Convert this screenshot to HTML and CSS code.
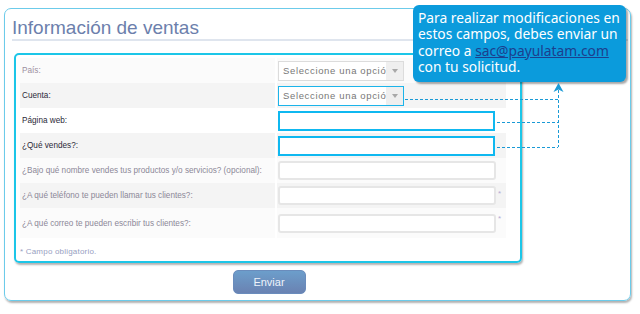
FILE: index.html
```html
<!DOCTYPE html>
<html lang="es">
<head>
    <meta charset="UTF-8" />
    <meta name="viewport" content="width=device-width, initial-scale=1" />
    <title>Información de ventas</title>
    <link rel="stylesheet" href="styles.css">
</head>
<body>
    <div class="page">
        <div class="panel">
            <h1 class="title">Información de ventas</h1>
            <form class="form-box" id="salesForm">
                <div class="row">
                    <label class="cell-label muted" for="pais">País:</label>
                    <div class="cell-field">
                        <div class="select">
                            <select id="pais" name="pais">
                                <option>Seleccione una opción</option>
                            </select>
                            <span class="select-arrow"></span>
                        </div>
                    </div>
                </div>
                <div class="row alt">
                    <label class="cell-label strong" for="cuenta">Cuenta:</label>
                    <div class="cell-field">
                        <div class="select active">
                            <select id="cuenta" name="cuenta">
                                <option>Seleccione una opción</option>
                            </select>
                            <span class="select-arrow"></span>
                        </div>
                    </div>
                </div>
                <div class="row plain">
                    <label class="cell-label strong" for="web">Página web:</label>
                    <div class="cell-field">
                        <input class="text-input active" type="text" id="web" name="web" />
                    </div>
                </div>
                <div class="row alt">
                    <label class="cell-label strong" for="vendes">¿Qué vendes?:</label>
                    <div class="cell-field">
                        <input class="text-input active" type="text" id="vendes" name="vendes" />
                    </div>
                </div>
                <div class="row">
                    <label class="cell-label" for="marca">¿Bajo qué nombre vendes tus productos y/o servicios? (opcional):</label>
                    <div class="cell-field">
                        <input class="text-input" type="text" id="marca" name="marca" />
                    </div>
                </div>
                <div class="row alt">
                    <label class="cell-label" for="telefono">¿A qué teléfono te pueden llamar tus clientes?:</label>
                    <div class="cell-field">
                        <input class="text-input" type="text" id="telefono" name="telefono" />
                        <span class="required">*</span>
                    </div>
                </div>
                <div class="row last">
                    <label class="cell-label" for="correo">¿A qué correo te pueden escribir tus clientes?:</label>
                    <div class="cell-field">
                        <input class="text-input" type="text" id="correo" name="correo" />
                        <span class="required">*</span>
                    </div>
                </div>
                <p class="note">* Campo obligatorio.</p>
            </form>
            <div class="actions">
                <button type="submit" form="salesForm">Enviar</button>
            </div>
        </div>

        <div class="tip">
            Para realizar modificaciones en<br>
            estos campos, debes enviar un<br>
            correo a <a href="mailto:sac@payulatam.com">sac@payulatam.com</a><br>
            con tu solicitud.
        </div>

        <svg class="guides" width="640" height="314" viewBox="0 0 640 314">
            <g fill="none" stroke="#1a9ad6" stroke-width="1" stroke-dasharray="3 2">
                <path d="M405 99.5H558" />
                <path d="M497 122.5H558" />
                <path d="M497 147.5H558" />
                <path d="M558.5 90V147" />
            </g>
            <polygon points="558.5,83 553.5,92 558.5,89.5 563.5,92" fill="#1a9ad6" />
        </svg>
    </div>
</body>
</html>
```

FILE: styles.css
```css
body {
    margin: 0;
    font-family: "Liberation Sans", Arial, sans-serif;
    background-color: #ffffff;
}
.page {
    position: relative;
    width: 640px;
    height: 314px;
    overflow: hidden;
}
.panel {
    margin: 8px 0 0 4px;
    width: 627px;
    height: 293px;
    box-sizing: border-box;
    border: 1px solid #6ccbea;
    border-radius: 7px;
    box-shadow: 1px 2px 2px rgba(0,0,0,0.3);
    overflow: hidden;
}
.title {
    margin: 8px 2px 0 7px;
    font-size: 19px;
    line-height: 22px;
    font-weight: normal;
    color: #6c80ac;
    border-bottom: 2px solid #dfe5ee;
}
.form-box {
    margin: 12px 0 0 9px;
    width: 508px;
    box-sizing: border-box;
    border: 2px solid #1cc6e8;
    border-radius: 5px;
    box-shadow: 1px 2px 2px rgba(0,0,0,0.3);
    padding: 3px 14px 3px 4px;
}
.row {
    display: grid;
    grid-template-columns: 255px 229px;
    column-gap: 2px;
    height: 25px;
}
.row > * {
    background-color: #fbfbfb;
}
.row.plain > * {
    background-color: #ffffff;
}
.row.alt > * {
    background-color: #f4f4f4;
}
.row.last {
    height: 30px;
}
.cell-label {
    display: flex;
    align-items: center;
    padding-left: 2px;
    font-size: 8.2px;
    color: #8c8898;
    white-space: nowrap;
}
.cell-label.muted {
    color: #9b8fa0;
}
.cell-label.strong {
    color: #2c2a38;
}
.cell-field {
    display: flex;
    align-items: center;
    padding-left: 1px;
}
.select {
    display: flex;
    width: 126px;
    height: 20px;
    box-sizing: border-box;
    border: 1px solid #dcdcdc;
    background-color: #ffffff;
}
.select.active {
    border-color: #1cb4ea;
}
.select select {
    appearance: none;
    -webkit-appearance: none;
    flex: 1;
    min-width: 0;
    border: none;
    outline: none;
    background: transparent;
    padding: 0 0 0 4px;
    font-family: "Liberation Sans", Arial, sans-serif;
    font-size: 9.5px;
    letter-spacing: 0.65px;
    color: #777777;
}
.select-arrow {
    width: 17px;
    display: flex;
    align-items: center;
    justify-content: center;
    background-color: #efefef;
}
.select-arrow::after {
    content: "";
    border-left: 3px solid transparent;
    border-right: 3px solid transparent;
    border-top: 4px solid #a8a8a8;
}
.text-input {
    width: 218px;
    height: 19px;
    box-sizing: border-box;
    border: 2px solid #e6e6e6;
    border-radius: 3px;
    background-color: #ffffff;
    outline: none;
}
.text-input.active {
    width: 217px;
    height: 20px;
    border-color: #0fb8f0;
    border-radius: 0;
}
.required {
    align-self: flex-start;
    margin: 7px 0 0 2px;
    font-size: 8px;
    line-height: 8px;
    color: #b4acd4;
}
.note {
    margin: 8px 0 0 0;
    font-size: 8px;
    line-height: 12px;
    letter-spacing: 0.2px;
    color: #97a0c2;
}
.actions {
    width: 508px;
    margin: 7px 0 0 10px;
    display: flex;
    justify-content: center;
}
.actions button {
    width: 73px;
    height: 24px;
    border: 1px solid #6a8cbc;
    border-radius: 5px;
    background: linear-gradient(#6c9ecb, #6a82b2);
    color: #eef2fa;
    font-family: "Liberation Sans", Arial, sans-serif;
    font-size: 11px;
    cursor: pointer;
}
.tip {
    position: absolute;
    left: 413px;
    top: 5px;
    width: 213px;
    height: 77px;
    box-sizing: border-box;
    padding: 5px 0 0 5px;
    background-color: #0b9bdc;
    border-radius: 6px;
    box-shadow: 2px 2px 2px rgba(0,0,0,0.35);
    color: #ffffff;
    font-family: "Noto Sans", sans-serif;
    font-size: 13.8px;
    line-height: 16.4px;
    white-space: nowrap;
}
.tip a {
    color: #1c3f8e;
}
.guides {
    position: absolute;
    left: 0;
    top: 0;
    pointer-events: none;
}
```
